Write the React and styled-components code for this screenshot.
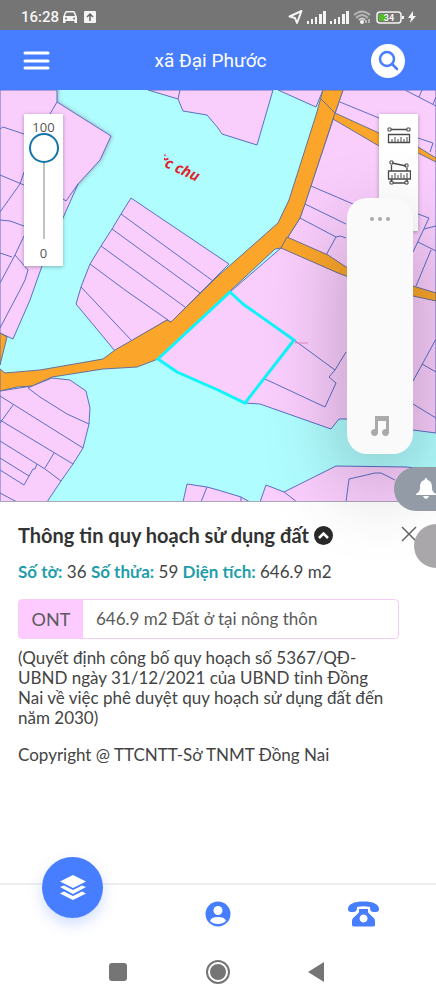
import React, { useState } from 'react';
import styled, { createGlobalStyle } from 'styled-components';

const colors = {
  primary: '#477dff',
  teal: '#1f9eaa',
  text: '#444444',
  water: '#b0fdff',
  parcel: '#f9cdfc',
  parcelLine: '#5b6fc4',
  road: '#fba62b',
  roadLine: '#6b6f94',
  selected: '#0ff4fb',
  system: '#757575',
};

const GlobalStyle = createGlobalStyle`
  *, *::before, *::after {
    box-sizing: border-box;
  }

  body {
    margin: 0;
    background: #ffffff;
    color: ${colors.text};
    font-family: Lato, 'Noto Sans', sans-serif;
  }

  button {
    padding: 0;
    border: 0;
    background: none;
    color: inherit;
    font: inherit;
    cursor: pointer;
  }

  svg {
    display: block;
  }
`;

const Page = styled.div`
  position: relative;
  display: flex;
  flex-direction: column;
  min-height: 100vh;
  overflow: hidden;
`;

const StatusBar = styled.div`
  display: flex;
  align-items: center;
  justify-content: space-between;
  height: 30px;
  padding: 4px 20px 0 21px;
  background: ${colors.system};
  color: #f4f4f4;
  font: 500 15px/20px Roboto, sans-serif;
`;

const StatusGroup = styled.div`
  display: flex;
  align-items: center;
  gap: 4px;
`;

const Header = styled.header`
  display: flex;
  align-items: center;
  justify-content: space-between;
  height: 60px;
  padding: 2px 31px 0 23px;
  background: ${colors.primary};
  color: #ffffff;
`;

const HeaderTitle = styled.h1`
  margin: 0;
  font: 400 19px/28px Roboto, sans-serif;
`;

const SearchButton = styled.button`
  display: flex;
  align-items: center;
  justify-content: center;
  width: 34px;
  height: 34px;
  border-radius: 50%;
  background: #ffffff;
`;

const MapArea = styled.section`
  position: relative;
  height: 412px;
  border-bottom: 1px solid #a9a5bd;
  background: ${colors.water};

  > svg {
    width: 100%;
    height: 100%;
  }
`;

const MapPanel = styled.div`
  position: absolute;
  top: 24px;
  display: flex;
  flex-direction: column;
  align-items: center;
  width: 39px;
  background: #ffffff;
  box-shadow: 0 1px 4px rgba(0, 0, 0, 0.3);
`;

const OpacityPanel = styled(MapPanel)`
  left: 24px;
  padding: 4px 0;
  color: #555555;
  font: 400 13px/18px 'Open Sans', sans-serif;

  label {
    height: 15px;
  }

  output {
    margin-top: 5px;
  }
`;

const OpacitySlider = styled.input`
  width: 30px;
  height: 106px;
  margin: 0;
  appearance: none;
  background: linear-gradient(#c2c2c2, #c2c2c2) center / 2px 100% no-repeat;
  direction: rtl;
  writing-mode: vertical-lr;

  &::-webkit-slider-thumb {
    width: 30px;
    height: 30px;
    appearance: none;
    border: 2px solid #1574a6;
    border-radius: 50%;
    background: #ffffff;
  }
`;

const ToolsPanel = styled(MapPanel)`
  right: 18px;
  gap: 16px;
  height: 117px;
  padding-top: 12px;
  color: #4a4a4a;
`;

const VolumePanel = styled.div`
  position: absolute;
  top: 198px;
  right: 23px;
  display: flex;
  flex-direction: column;
  align-items: center;
  justify-content: space-between;
  width: 66px;
  height: 256px;
  padding: 18px 0;
  border-radius: 20px;
  background: #fafafa;
  box-shadow: 0 30px 80px rgba(0, 0, 0, 0.28);
`;

const Bubble = styled.button`
  position: absolute;
  top: ${props => props.$top}px;
  right: 0;
  display: flex;
  align-items: center;
  justify-content: flex-end;
  width: ${props => props.$width}px;
  height: 44px;
  border-radius: 22px 0 0 22px;
  background: ${props => props.$tone};
`;

const Info = styled.main`
  flex: 1;
  padding: 19px 18px;
`;

const InfoHeader = styled.div`
  display: flex;
  align-items: center;
  justify-content: space-between;
`;

const InfoTitle = styled.h2`
  display: flex;
  align-items: center;
  gap: 5px;
  margin: 0;
  color: #333333;
  font-size: 20px;
  font-weight: 700;
  line-height: 28px;
  white-space: nowrap;
`;

const Facts = styled.p`
  margin: 11px 0 15px;
  font-size: 17px;
  line-height: 24px;

  b {
    color: ${colors.teal};
  }
`;

const LandUse = styled.div`
  display: flex;
  height: 40px;
  margin-right: 19px;
  border: 1px solid #f6cdf5;
  border-radius: 4px;
  color: #5a5a5a;
  font-size: 17px;
  line-height: 38px;
`;

const LandUseCode = styled.span`
  flex: 0 0 64px;
  background: #fdcbff;
  font-size: 18px;
  text-align: center;
`;

const LandUseName = styled.span`
  padding-left: 13px;
`;

const Note = styled.p`
  margin: ${props => props.$top}px 0 0;
  font-size: 17px;
  line-height: 20px;
`;

const TabBar = styled.nav`
  display: grid;
  grid-template-columns: repeat(3, 1fr);
  align-items: center;
  justify-items: center;
  height: 60px;
  border-top: 2px solid #eeeeee;
  color: ${colors.primary};
`;

const LayersButton = styled.button`
  display: flex;
  align-items: center;
  justify-content: center;
  align-self: start;
  width: 61px;
  height: 61px;
  margin-top: -28px;
  border-radius: 50%;
  background: ${colors.primary};
  box-shadow: 0 6px 14px rgba(71, 125, 255, 0.25);
`;

const SystemNav = styled.nav`
  display: flex;
  justify-content: center;
  gap: 40px;
  height: 57px;
`;

const SystemButton = styled.button`
  display: flex;
  align-items: center;
  justify-content: center;
  width: 60px;
  height: 57px;
`;

const parcels = [
  'M0 0H57V12L111 46L100 70L78 94L63 128L42 176L30 210L13 249L0 243Z',
  'M148 0L178 9L183 21L207 25L218 38L222 44L257 55L273 0Z',
  'M278 0L316 17L323 0Z',
  'M131 108L121 124L112 139L101 156L90 174L81 197L76 214L115 261L167 230L171 232L218 185L229 174Z',
  'M0 301L32 296L52 288L70 290L86 301L90 318L89 334L83 358L73 374L61 391L47 412H0Z',
  'M343 0L300 128L281 158L230 202L158 269L177 282L218 299L245 313L260 314L331 339L339 329H346L413 340L436 343V0Z',
  'M260 412L266 395L284 402L336 376L406 377L436 380V412Z',
  'M183 412L187 394L207 397L218 400L241 407L250 412Z',
];

const parcelLines = [
  'M57 12L50 24M0 39L3 37L24 44M0 85L24 95M24 82L20 94L0 122M0 130L10 131L24 136',
  'M0 163L12 167M24 146L15 165L0 193M15 165L28 180L25 190L20 200L0 238M78 94L66 111L63 109',
  'M178 9L180 0',
  'M121 124L213 191M112 139L200 203M101 156L185 217M90 174L125 200L168 230M81 197L132 251',
  'M32 296L28 298L40 307L67 324L89 334M0 306L83 358M0 330L73 374M13 315L0 333',
  'M0 351L45 379L61 391M54 363L45 378M0 368L29 386M0 380L24 395L33 379H35L37 374M0 403L17 412',
  'M340 12L379 28L418 48L433 53L430 62M405 0L436 16M419 7L422 0M433 14L436 7',
  'M311 96L353 114L418 124L429 128L413 162M424 139L436 136M418 152L436 161M431 160L416 196',
  'M305 114L346 134M300 128L336 147L325 167M336 147L340 146L346 148',
  'M294 250L335 280L329 287L336 293L325 317L265 289M335 280L346 262',
  'M413 291L436 249M422 274L436 282M413 314L436 328',
  'M284 402L297 412M346 412L349 389L375 383H381L395 390M207 397L201 412M241 407V412',
];

const roads = [
  'M323 0L318 18L317 22L289 110L278 133L218 186L171 232L167 230L115 260L103 269L40 280L5 283L0 279V301L17 297L32 296L52 287L103 279L137 277L158 269L230 201L275 159L281 158L300 128L305 114L333 29L343 0Z',
  'M0 243L7 247L0 275Z',
  'M335 23L379 43L418 57L436 68V72L418 63L379 56L333 29Z',
  'M287 147L328 165L346 177L413 196L436 203V211L413 206L346 186L338 183L281 158Z',
];

const LandMap = () => (
  <svg viewBox="0 0 436 411" preserveAspectRatio="xMidYMid slice" aria-hidden="true">
    <defs>
      <filter id="edge" x="-10%" y="-10%" width="120%" height="120%">
        <feDropShadow dx="1" dy="0" stdDeviation="2" floodColor="#7a5570" floodOpacity="0.5" />
      </filter>
      <clipPath id="label">
        <path d="M165 60L201 85L196 92L162 86Z" />
      </clipPath>
    </defs>
    <path d="M-5 -5H57V12L111 46L100 70L78 94L63 110L-5 90Z" fill={colors.parcel} filter="url(#edge)" />
    <g fill={colors.parcel} stroke={colors.parcelLine} strokeWidth="1">
      {parcels.map(d => <path key={d} d={d} />)}
    </g>
    <g fill="none" stroke={colors.parcelLine} strokeWidth="1">
      {parcelLines.map(d => <path key={d} d={d} />)}
    </g>
    <g fill={colors.road} stroke={colors.roadLine} strokeWidth="1">
      {roads.map(d => <path key={d} d={d} />)}
    </g>
    <path d="M321 9L335 23" stroke={colors.roadLine} />
    <path
      d="M230 202L243 214L294 250L245 313L218 300L177 282L158 269Z"
      fill={colors.parcel}
      stroke={colors.selected}
      strokeWidth="3"
    />
    <path d="M295 253H308" stroke="#e58ac0" />
    <g clipPath="url(#label)">
      <text
        transform="translate(154 72) rotate(25)"
        fill="#e0262d"
        fontFamily="Open Sans, sans-serif"
        fontSize="15"
        fontStyle="italic"
        fontWeight="700"
      >
        ức chung
      </text>
    </g>
  </svg>
);

const Signal = () => (
  <svg width="19" height="13" fill="currentColor" aria-hidden="true">
    <path d="M0 10h2v3H0zM4 8h2v5H4zM8 6h2v7H8zM12 3h3v10h-3zM16 0h3v13h-3z" />
  </svg>
);

const StatusIcons = () => (
  <>
    <svg width="15" height="16" viewBox="0 0 15 16" fill="none" stroke="currentColor" strokeWidth="2" aria-hidden="true">
      <path d="M1.5 7.5L13.5 2L9 14L7 9Z" strokeLinejoin="round" />
    </svg>
    <Signal />
    <Signal />
    <svg width="19" height="14" viewBox="0 0 19 14" fill="none" stroke="currentColor" strokeWidth="2" aria-hidden="true">
      <g opacity="0.5">
        <path d="M1 5Q9 -2 17 5" />
        <path d="M3 8Q9 2 15 8" />
      </g>
      <path d="M6 10Q9 7 12 10" opacity="0.7" />
      <circle cx="9" cy="12" r="1" />
      <path d="M13 13v-3M16 9v4" strokeWidth="1" />
    </svg>
    <svg width="28" height="13" viewBox="0 0 28 13" aria-hidden="true">
      <rect x="1" y="1" width="24" height="11" rx="3" fill="none" stroke="currentColor" strokeWidth="1.5" />
      <path d="M3 3h7v7H3z" fill="#55bd22" />
      <path d="M26 5h2v3h-2z" fill="currentColor" />
      <text x="13" y="10" textAnchor="middle" fill="currentColor" fontSize="9" fontWeight="700">34</text>
    </svg>
    <svg width="8" height="12" viewBox="0 0 8 12" fill="currentColor" aria-hidden="true">
      <path d="M5 0L0 7h3L2 12L8 5H5Z" />
    </svg>
  </>
);

const RulerIcon = () => (
  <svg width="24" height="18" viewBox="0 0 24 18" fill="none" stroke="currentColor" aria-hidden="true">
    <path d="M4 3.5H20M1.5 8.5h21v8h-21z" strokeWidth="1.3" />
    <path d="M1 2h3v3H1zM20 2h3v3h-3zM5 16v-3M8 16v-5M11 16v-3M14 16v-5M17 16v-3M20 16v-5" />
  </svg>
);

const AreaIcon = () => (
  <svg width="24" height="26" viewBox="0 0 24 26" fill="none" stroke="currentColor" aria-hidden="true">
    <path d="M5 3L19 6M4.5 5v6M20 8v3M4.5 19v3M20 19v3M6 23h12M1.5 11h22v8h-22z" strokeWidth="1.3" />
    <path d="M3 1h3v3H3zM18 4h3v3h-3zM3 21h3v3H3zM18 21h3v3h-3zM5 18v-3M8 18v-5M11 18v-3M14 18v-5M17 18v-3M20 18v-5" />
  </svg>
);

const App = () => {
  const [opacity, setOpacity] = useState(100);

  return (
    <>
      <GlobalStyle />
      <Page>
        <StatusBar>
          <StatusGroup>
            <span>16:28</span>
            <svg width="14" height="12" viewBox="0 0 14 12" fill="currentColor" aria-hidden="true">
              <path
                fillRule="evenodd"
                d="M3 0H11L12 1L14 6V12H11.5V10H2.5V12H0V6L2 1ZM3.5 1.5L2 5H12L10.5 1.5ZM3 6.5a1 1 0 1 0 .1 0ZM11 6.5a1 1 0 1 0 .1 0Z"
              />
            </svg>
            <svg width="17" height="12" viewBox="0 0 17 12" aria-hidden="true">
              <rect x="3" width="12" height="12" rx="1" fill="currentColor" />
              <path d="M9 10V3M6 6L9 3L12 6" fill="none" stroke="#666666" strokeWidth="1.5" />
            </svg>
          </StatusGroup>
          <StatusGroup>
            <StatusIcons />
          </StatusGroup>
        </StatusBar>

        <Header>
          <button type="button" aria-label="Menu">
            <svg width="27" height="20" fill="none" stroke="currentColor" strokeWidth="3" strokeLinecap="round">
              <path d="M2 2H25M2 10H25M2 17H25" />
            </svg>
          </button>
          <HeaderTitle>xã Đại Phước</HeaderTitle>
          <SearchButton type="button" aria-label="Tìm kiếm">
            <svg width="22" height="22" fill="none" stroke={colors.primary} strokeWidth="2.5" strokeLinecap="round">
              <circle cx="10" cy="9" r="7" />
              <path d="M15 14L20 19" />
            </svg>
          </SearchButton>
        </Header>

        <MapArea>
          <LandMap />
          <OpacityPanel>
            <label htmlFor="opacity">100</label>
            <OpacitySlider
              id="opacity"
              type="range"
              min="0"
              max="100"
              value={opacity}
              onChange={event => setOpacity(Number(event.target.value))}
            />
            <output>0</output>
          </OpacityPanel>
          <ToolsPanel>
            <button type="button" aria-label="Đo khoảng cách">
              <RulerIcon />
            </button>
            <button type="button" aria-label="Đo diện tích">
              <AreaIcon />
            </button>
          </ToolsPanel>
        </MapArea>

        <Info>
          <InfoHeader>
            <InfoTitle>
              Thông tin quy hoạch sử dụng đất
              <button type="button" aria-label="Thu gọn">
                <svg width="19" height="19" viewBox="0 0 19 19">
                  <circle cx="9.5" cy="9.5" r="9.5" fill="#292929" />
                  <path d="M5 12L9.5 7.5L14 12" fill="none" stroke="#ffffff" strokeWidth="2.5" />
                </svg>
              </button>
            </InfoTitle>
            <button type="button" aria-label="Đóng">
              <svg width="18" height="18" fill="none" stroke="#666666" strokeWidth="1.5">
                <path d="M2 1L16 15M16 1L2 15" />
              </svg>
            </button>
          </InfoHeader>
          <Facts>
            <b>Số tờ:</b> 36 <b>Số thửa:</b> 59 <b>Diện tích:</b> 646.9 m2
          </Facts>
          <LandUse>
            <LandUseCode>ONT</LandUseCode>
            <LandUseName>646.9 m2 Đất ở tại nông thôn</LandUseName>
          </LandUse>
          <Note $top={9}>
            (Quyết định công bố quy hoạch số 5367/QĐ-
            <br />
            UBND ngày 31/12/2021 của UBND tỉnh Đồng
            <br />
            Nai về việc phê duyệt quy hoạch sử dụng đất đến
            <br />
            năm 2030)
          </Note>
          <Note $top={17}>Copyright @ TTCNTT-Sở TNMT Đồng Nai</Note>
        </Info>

        <TabBar>
          <LayersButton type="button" aria-label="Lớp bản đồ">
            <svg width="28" height="26" viewBox="0 0 28 26" fill="#ffffff">
              <path d="M14 0L27 6.5L14 13L1 6.5Z" />
              <path d="M1 12L5 10.5L14 15L23 10.5L27 12L14 19Z" />
              <path d="M1 18.5L5 16.5L14 21L23 16.5L27 18.5L14 25Z" />
            </svg>
          </LayersButton>
          <button type="button" aria-label="Tài khoản">
            <svg width="26" height="26" viewBox="0 0 26 26">
              <circle cx="13" cy="13" r="12.5" fill="currentColor" />
              <circle cx="13" cy="9.5" r="4.5" fill="#ffffff" />
              <path d="M5 20Q6 16 13 16T21 20Q18 23 13 23T5 20Z" fill="#ffffff" />
            </svg>
          </button>
          <button type="button" aria-label="Liên hệ">
            <svg width="31" height="26" viewBox="0 0 31 26" fill="currentColor">
              <path d="M0 8C0 3 6 0.5 15.5 0.5S31 3 31 8C31 11 29 11 26.5 11C23 11 22 10 22 6Q15.5 4.5 9 6C9 10 8 11 4.5 11C2 11 0 11 0 8Z" />
              <path
                fillRule="evenodd"
                d="M11 8H20V11C21 14 27 16 27 20V24Q27 25.5 25 25.5H6Q4 25.5 4 24V20C4 16 10 14 11 11ZM15.5 13.5a4 4 0 1 0 .1 0Z"
              />
            </svg>
          </button>
        </TabBar>

        <SystemNav>
          <SystemButton type="button" aria-label="Ứng dụng gần đây">
            <svg width="18" height="18" fill={colors.system}>
              <rect width="18" height="18" rx="3" />
            </svg>
          </SystemButton>
          <SystemButton type="button" aria-label="Màn hình chính">
            <svg width="24" height="24" fill={colors.system}>
              <circle cx="12" cy="12" r="11" fill="none" stroke={colors.system} strokeWidth="2" />
              <circle cx="12" cy="12" r="8" />
            </svg>
          </SystemButton>
          <SystemButton type="button" aria-label="Quay lại">
            <svg width="20" height="20" fill={colors.system}>
              <path d="M0 10L16 0V20Z" />
            </svg>
          </SystemButton>
        </SystemNav>

        <VolumePanel>
          <svg width="22" height="6" fill="#aaaaaa" aria-hidden="true">
            <circle cx="3" cy="3" r="2" />
            <circle cx="11" cy="3" r="2" />
            <circle cx="19" cy="3" r="2" />
          </svg>
          <svg width="20" height="20" viewBox="0 0 20 20" fill="#aaaaaa" aria-hidden="true">
            <path d="M5 0H19V16A3.500 3.500 0 1 1 16 13V5H8V16A3.500 3.500 0 1 1 5 13Z" />
          </svg>
        </VolumePanel>
        <Bubble type="button" aria-label="Thông báo" $top={467} $width={42} $tone="#929ba6">
          <svg width="20" height="24" viewBox="0 0 20 24" fill="#ffffff">
            <path d="M10 1Q11.5 1 11.5 3C15 4 16 7 16 10C16 14 17 15 20 17V18H0V17C3 15 4 14 4 10C4 7 5 4 8.5 3Q8.5 1 10 1ZM7 19H13Q12 22 10 22T7 19Z" />
          </svg>
        </Bubble>
        <Bubble type="button" aria-label="Tắt tiếng" $top={524} $width={22} $tone="#aaa7aa" />
      </Page>
    </>
  );
};

export default App;
